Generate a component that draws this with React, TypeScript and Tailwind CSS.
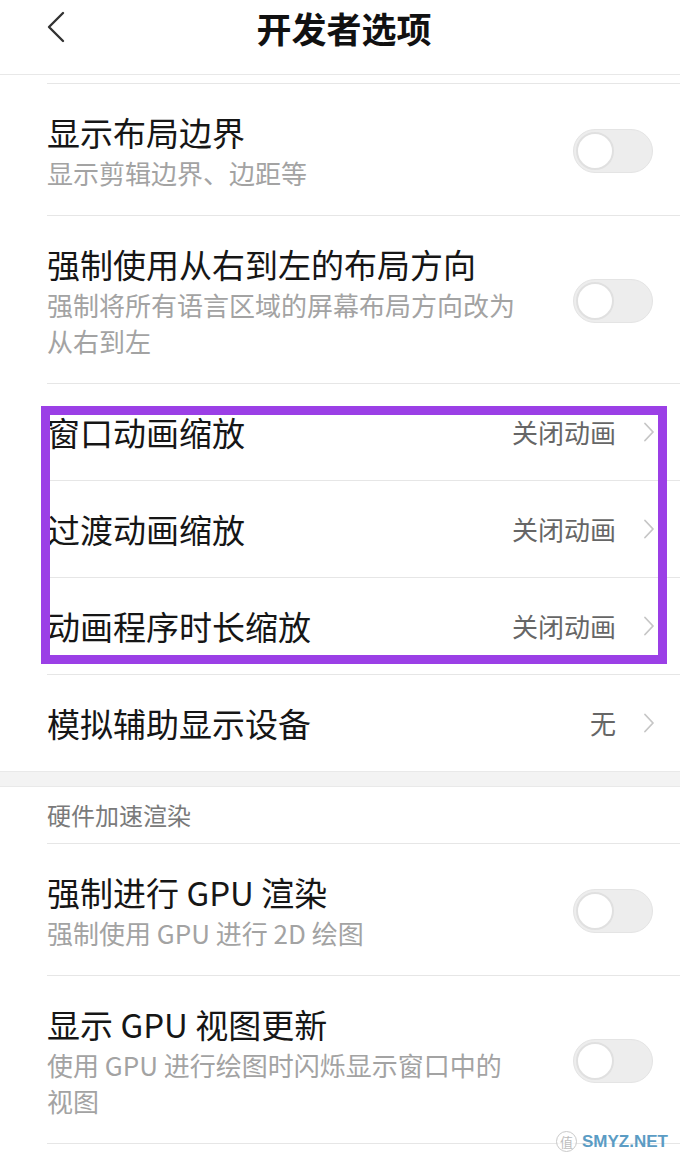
const font = { fontFamily: '"Noto Sans CJK SC", "Noto Sans", sans-serif' };

const Toggle = () => (
  <div className="w-[80px] h-[44px] rounded-full bg-[#ededed] border border-[#e4e4e4] flex items-center px-[2px] shrink-0">
    <div className="w-[38px] h-[38px] rounded-full bg-white border-2 border-[#e0e0e0]" />
  </div>
);

const Chevron = () => (
  <svg width="12" height="20" viewBox="0 0 12 20" className="shrink-0">
    <polyline points="2,1.5 10,10 2,18.5" fill="none" stroke="#c6c6c6" strokeWidth="1.8" strokeLinecap="round" strokeLinejoin="round" />
  </svg>
);

const Divider = () => <div className="ml-[47px] h-px bg-[#e6e6e6]" />;

const SwitchRow = ({ title, sub }: { title: string; sub: string[] }) => (
  <>
    <div className="flex items-center pl-[47px] pr-[27px] pt-[27px] pb-[24px]">
      <div className="flex-1 pr-[24px]">
        <div className="text-[33px] leading-[42px] text-[#161616]">{title}</div>
        <div className="mt-[2px] text-[26px] leading-[36px] text-[#a3a3a3]">
          {sub.map((s) => (
            <div key={s}>{s}</div>
          ))}
        </div>
      </div>
      <Toggle />
    </div>
    <Divider />
  </>
);

const LinkRow = ({ title, value }: { title: string; value: string }) => (
  <div className="h-[96px] flex items-center pl-[47px] pr-[25px]">
    <div className="flex-1 text-[33px] leading-[42px] text-[#161616]">{title}</div>
    <div className="text-[26px] leading-[36px] text-[#666] mr-[27px]">{value}</div>
    <Chevron />
  </div>
);

export default function App() {
  return (
    <div className="relative w-[680px] min-h-[1161px] bg-white overflow-hidden" style={font}>
      {/* header */}
      <div className="relative h-[75px] border-b border-[#e8e8e8] flex justify-center">
        <svg width="20" height="32" viewBox="0 0 20 32" className="absolute left-[46px] top-[11px]">
          <polyline points="17,2 3,16 17,30" fill="none" stroke="#333" strokeWidth="2.4" strokeLinecap="round" strokeLinejoin="round" />
        </svg>
        <div className="mt-[8px] ml-[8px] text-[35px] leading-[40px] font-bold text-[#111]">开发者选项</div>
      </div>

      <div className="h-[8px]" />
      <Divider />

      <SwitchRow title="显示布局边界" sub={["显示剪辑边界、边距等"]} />
      <SwitchRow title="强制使用从右到左的布局方向" sub={["强制将所有语言区域的屏幕布局方向改为", "从右到左"]} />

      <LinkRow title="窗口动画缩放" value="关闭动画" />
      <Divider />
      <LinkRow title="过渡动画缩放" value="关闭动画" />
      <Divider />
      <LinkRow title="动画程序时长缩放" value="关闭动画" />
      <Divider />
      <LinkRow title="模拟辅助显示设备" value="无" />

      <div className="h-[16px] bg-[#f3f3f3] border-t border-b border-[#e9e9e9]" />

      <div className="h-[56px] flex items-center pl-[47px] text-[24px] text-[#7a7a7a]">硬件加速渲染</div>
      <Divider />

      <SwitchRow title="强制进行 GPU 渲染" sub={["强制使用 GPU 进行 2D 绘图"]} />
      <SwitchRow title="显示 GPU 视图更新" sub={["使用 GPU 进行绘图时闪烁显示窗口中的", "视图"]} />

      {/* highlight box */}
      <div className="absolute left-[41px] top-[406px] w-[626px] h-[258px] border-[9px] border-[#9b3fe6] pointer-events-none" />

      {/* watermark */}
      <div className="absolute left-[556px] top-[1131px] flex items-center gap-[5px]">
        <div className="w-[21px] h-[21px] rounded-full border border-[#c9c9c9] bg-white/70 flex items-center justify-center text-[13px] leading-none text-[#bdbdbd]">值</div>
        <div className="text-[17px] leading-[20px] font-bold text-[#5b9cc4]" style={{ fontFamily: '"Liberation Sans", sans-serif' }}>SMYZ.NET</div>
      </div>
    </div>
  );
}
